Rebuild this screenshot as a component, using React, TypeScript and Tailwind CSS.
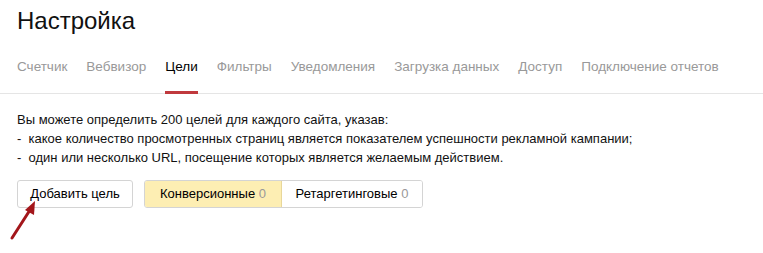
import React from 'react';

const tabs = [
  'Счетчик',
  'Вебвизор',
  'Цели',
  'Фильтры',
  'Уведомления',
  'Загрузка данных',
  'Доступ',
  'Подключение отчетов',
];

const App: React.FC = () => {
  return (
    <div className="w-[763px] h-[253px] bg-white overflow-hidden font-['Liberation_Sans',Arial,sans-serif] text-black">
      <h1 className="px-[17px] pt-[6px] text-[24px] leading-[30px] font-normal text-[#111]">Настройка</h1>

      <div className="mt-[21px] border-b border-[#e5e5e5] px-[17px] flex gap-[19px] whitespace-nowrap">
        {tabs.map((t) => (
          <div
            key={t}
            className={
              t === 'Цели'
                ? 'pb-[13px] text-[13.5px] leading-[20px] text-black border-b-[3px] border-[#c0393d] -mb-[1px]'
                : 'pb-[16px] text-[13.5px] leading-[20px] text-[#999]'
            }
          >
            {t}
          </div>
        ))}
      </div>

      <div className="px-[17px] pt-[16px] text-[13px] leading-[19px] text-[#111]">
        <p>Вы можете определить 200 целей для каждого сайта, указав:</p>
        <p>-&nbsp; какое количество просмотренных страниц является показателем успешности рекламной кампании;</p>
        <p>-&nbsp; один или несколько URL, посещение которых является желаемым действием.</p>
      </div>

      <div className="relative px-[17px] pt-[13px] flex items-center gap-[11px]">
        <button className="h-[28px] w-[116px] rounded-[3px] border border-[#d4d4d4] bg-white text-[13px] text-black">
          Добавить цель
        </button>
        <div className="flex h-[28px] rounded-[3px] border border-[#d4d4d4] overflow-hidden text-[13px]">
          <div className="w-[137px] flex items-center justify-center bg-[#fdeeb3] border-r border-[#e8d79a]">
            Конверсионные&nbsp;<span className="text-[#999]">0</span>
          </div>
          <div className="w-[140px] flex items-center justify-center bg-white">
            Ретаргетинговые&nbsp;<span className="text-[#999]">0</span>
          </div>
        </div>
        <svg className="absolute left-[8px] top-[29px]" width="34" height="46" viewBox="0 0 34 46">
          <path d="M4 42 L22 14" stroke="#a3161b" strokeWidth="3" strokeLinecap="round" fill="none" />
          <path d="M27 5 L17 14 L26 19 Z" fill="#a3161b" />
        </svg>
      </div>
    </div>
  );
};

export default App;
